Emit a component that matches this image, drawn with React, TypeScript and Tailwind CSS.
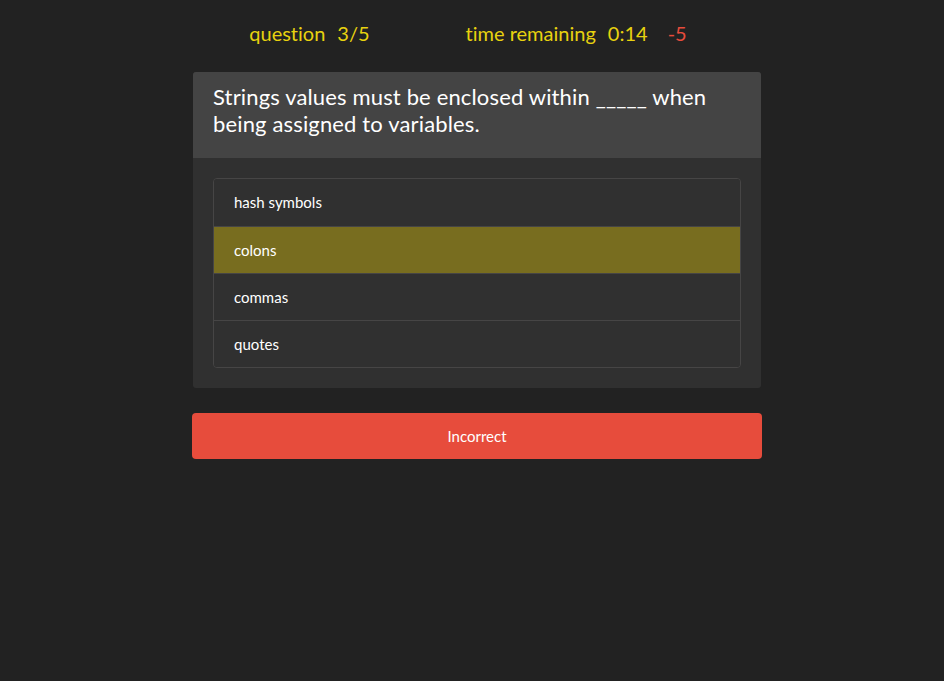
import React from 'react';

const answers = ['hash symbols', 'colons', 'commas', 'quotes'];
const selected = 1;

export default function App() {
  return (
    <div className="min-h-[681px] w-full bg-[#222222] font-['Lato','Noto_Sans',sans-serif] text-white [font-variant-ligatures:none]">
      <div className="flex h-[65px] items-center justify-center pr-[8px] text-[20px] text-[#e8d20f]">
        <div className="flex items-center gap-[12px]">
          <span>question</span>
          <span>3/5</span>
        </div>
        <div className="ml-[96px] flex items-center">
          <span>time remaining</span>
          <span className="ml-[12px]">0:14</span>
          <span className="ml-[20px] text-[#e74c3c]">-5</span>
        </div>
      </div>

      <div className="pl-[10px]">
        <div className="mx-auto mt-[7px] w-[570px]">
          <div className="mx-px overflow-hidden rounded-[3px] bg-[#303030]">
            <div className="h-[86px] bg-[#444444] px-[20px] pt-[11px] text-[22px] leading-[27px] tracking-[0.15px]">
              Strings values must be enclosed within _____ when being assigned to variables.
            </div>
            <div className="p-[20px]">
              <div className="overflow-hidden rounded-[4px] border border-[#464545]">
                {answers.map((a, i) => (
                  <div
                    key={a}
                    className={
                      'flex h-[47px] items-center px-[20px] text-[15px] ' +
                      (i > 0 ? 'border-t border-[#464545] ' : '') +
                      (i === selected ? 'bg-[#786d1f]' : 'bg-[#303030]')
                    }
                  >
                    {a}
                  </div>
                ))}
              </div>
            </div>
          </div>

          <button className="mt-[25px] flex h-[46px] w-full items-center justify-center rounded-[4px] bg-[#e74c3c] text-[15px] text-white">
            Incorrect
          </button>
        </div>
      </div>
    </div>
  );
}
